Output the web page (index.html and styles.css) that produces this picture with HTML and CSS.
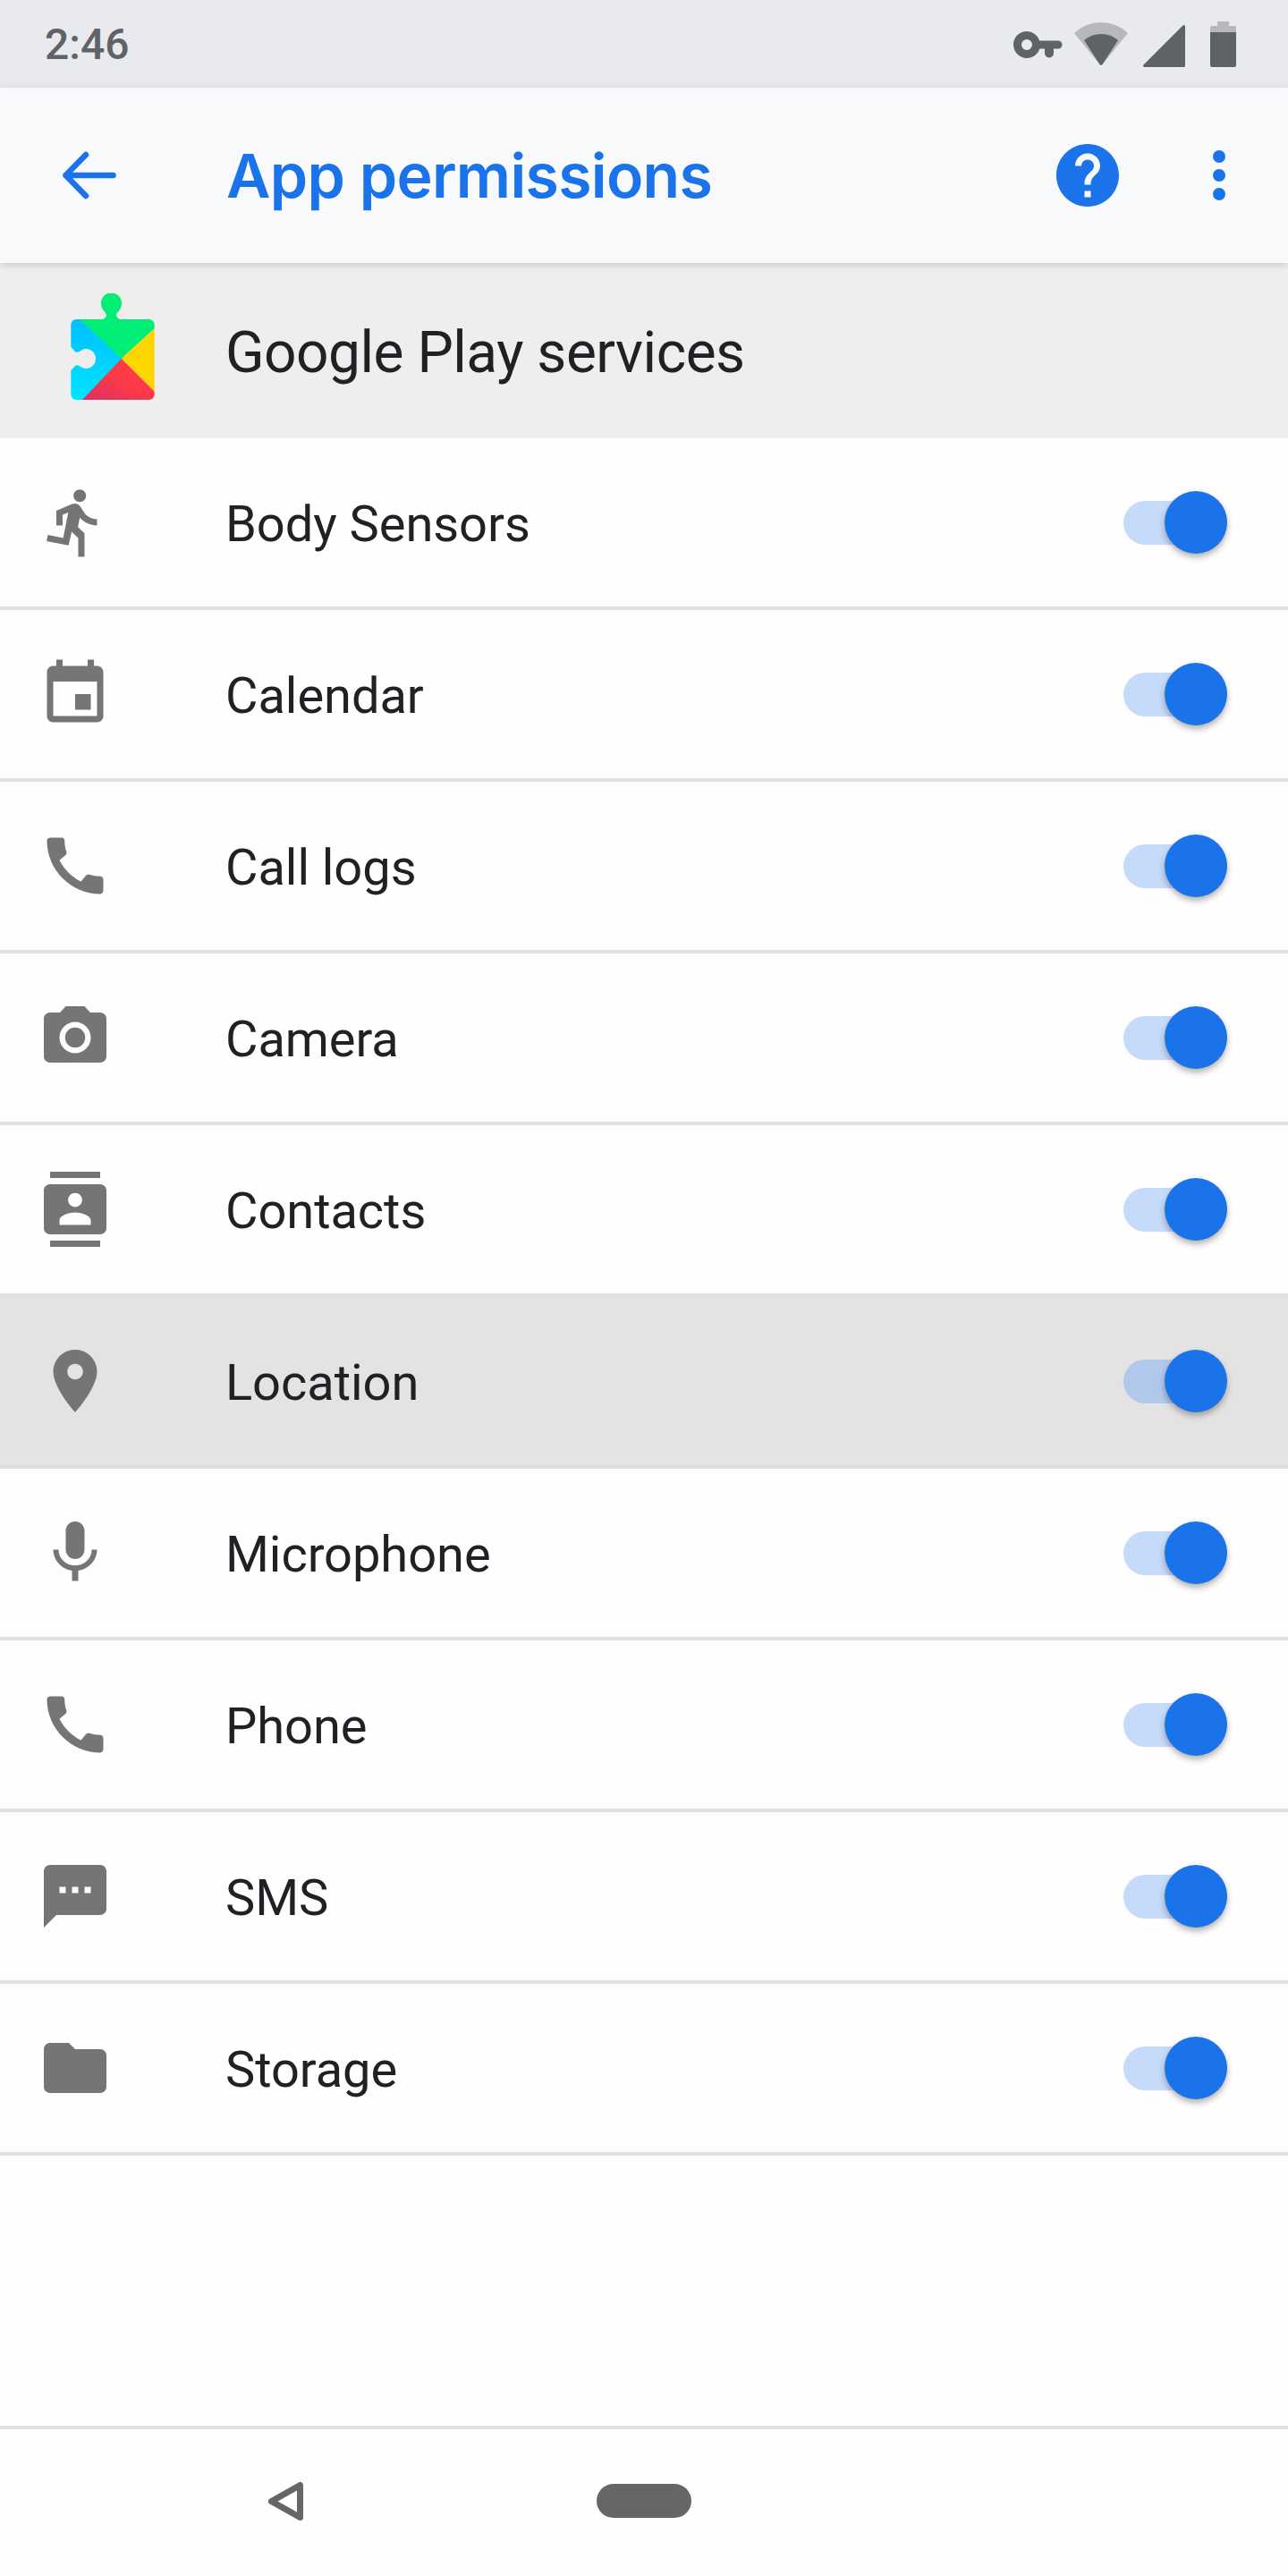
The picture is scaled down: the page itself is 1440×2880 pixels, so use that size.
FILE: index.html
```html
<!DOCTYPE html>
<html lang="en">
<head>
  <meta charset="UTF-8" />
  <title>App permissions</title>
  <link rel="stylesheet" href="styles.css">
</head>
<body>
  <div class="page">
    <div class="status-bar">
      <span class="clock">2:46</span>
      <svg class="status-icons" viewBox="1133 23 249 51" width="249" height="51">
        <!-- key -->
        <path fill="#5f6368" fill-rule="evenodd" d="M1148 34a15 15 0 0 1 14.300 10.500H1183a4.500 4.500 0 0 1 0 9h-5v5a5 5 0 0 1-10 0v-5h-5.700A15 15 0 1 1 1148 34zm0 9a6 6 0 1 0 0 12 6 6 0 0 0 0-12z"/>
        <!-- wifi -->
        <path fill="#b7b8bb" d="M1201 36Q1214 24 1231 24T1261 36L1232.500 71a2 2 0 0 1-3 0z"/>
        <path fill="#5f6368" d="M1212 44Q1220 37 1231 37T1250 44L1232.500 71a2 2 0 0 1-3 0z"/>
        <!-- signal -->
        <path fill="#5f6368" stroke="#5f6368" stroke-width="3" stroke-linejoin="round" d="M1323.500 28.500V72.500H1279.500z"/>
        <!-- battery -->
        <path fill="#b7b8bb" d="M1361 23h13v5h6a2 2 0 0 1 2 2v6h-29v-6a2 2 0 0 1 2-2h6z"/>
        <path fill="#5f6368" d="M1353 35h29v37a2 2 0 0 1-2 2h-25a2 2 0 0 1-2-2z"/>
      </svg>
    </div>

    <header class="toolbar">
      <svg class="back-arrow" viewBox="0 0 66 66" width="66" height="66">
        <path fill="none" stroke="#1a73e8" stroke-width="6.500" stroke-linecap="round" stroke-linejoin="round" d="M59.500 33H6.500M29 10L6.500 33 29 56"/>
      </svg>
      <h1 class="toolbar-title">App permissions</h1>
      <svg class="icon help" viewBox="0 0 24 24"><path d="M12 2C6.480 2 2 6.480 2 12s4.480 10 10 10 10-4.480 10-10S17.520 2 12 2zm1 17h-2v-2h2v2zm2.070-7.750l-.9.920C13.450 12.900 13 13.500 13 15h-2v-.5c0-1.100.45-2.100 1.170-2.830l1.240-1.260c.37-.36.59-.86.59-1.410 0-1.100-.9-2-2-2s-2 .9-2 2H8c0-2.210 1.790-4 4-4s4 1.790 4 4c0 .88-.36 1.680-.93 2.250z"/></svg>
      <svg class="icon more" viewBox="0 0 24 24"><circle cx="12" cy="6" r="2"/><circle cx="12" cy="12" r="2"/><circle cx="12" cy="18" r="2"/></svg>
    </header>

    <div class="app-header">
      <svg class="app-logo" viewBox="79 328 94 120" width="94" height="120">
        <defs>
          <clipPath id="logoBody"><rect x="79.300" y="357" width="93.400" height="90" rx="6"/></clipPath>
          <linearGradient id="logoCyan" x1="0" y1="0" x2="0" y2="1">
            <stop offset="0" stop-color="#00bfff"/>
            <stop offset="1" stop-color="#00e4ff"/>
          </linearGradient>
          <linearGradient id="logoRed" x1="0" y1="1" x2="1" y2="0">
            <stop offset="0" stop-color="#dc2f62"/>
            <stop offset=".55" stop-color="#ff3a46"/>
          </linearGradient>
        </defs>
        <path fill="#00ee76" d="M112 358c4-1 7-3 7-6 0-3-6-5-6-13a11.500 11.500 0 0 1 23 0c0 8-6 10-6 13 0 3 3 5 7 6z"/>
        <g clip-path="url(#logoBody)">
          <rect x="79" y="357" width="60" height="90" fill="url(#logoCyan)"/>
          <path fill="#00ee76" d="M89 357H173V367L135.700 401z"/>
          <path fill="#ffd500" d="M173 367V438L135.700 401z"/>
          <path fill="url(#logoRed)" d="M135.700 401L173 438V447H92z"/>
        </g>
        <path fill="#eeeeee" d="M79 388c2 1 3 3 5 5 2 2 5 0 8-2 6-3 15 1 15 10s-9 13-15 10c-3-2-6-4-8-2-2 2-3 4-5 5z"/>
      </svg>
      <span class="app-name">Google Play services</span>
    </div>

    <ul class="perm-list">
      <li class="perm-row">
        <svg class="icon perm-icon" viewBox="0 0 24 24"><path d="M13.490 5.480c1.100 0 2-.9 2-2s-.9-2-2-2-2 .9-2 2 .9 2 2 2zm-3.600 13.900l1-4.400 2.100 2v6h2v-7.500l-2.100-2 .6-3c1.300 1.500 3.300 2.500 5.500 2.500v-2c-1.900 0-3.500-1-4.300-2.400l-1-1.600c-.4-.6-1-1-1.700-1-.3 0-.5.1-.8.1l-5.200 2.200v4.700h2v-3.400l1.800-.7-1.600 8.100-4.900-1-.4 2 7 1.400z"/></svg>
        <span class="perm-label">Body Sensors</span>
        <span class="switch"><span class="thumb"></span></span>
      </li>
      <li class="perm-row">
        <svg class="icon perm-icon" viewBox="0 0 24 24"><path d="M17 12h-5v5h5v-5zM16 1v2H8V1H6v2H5c-1.110 0-1.990.9-1.990 2L3 19c0 1.100.89 2 2 2h14c1.100 0 2-.9 2-2V5c0-1.100-.9-2-2-2h-1V1h-2zm3 18H5V8h14v11z"/></svg>
        <span class="perm-label">Calendar</span>
        <span class="switch"><span class="thumb"></span></span>
      </li>
      <li class="perm-row">
        <svg class="icon perm-icon" viewBox="0 0 24 24"><path d="M20.010 15.380c-1.230 0-2.420-.2-3.530-.56-.35-.12-.74-.03-1.010.24l-1.570 1.970c-2.830-1.350-5.480-3.900-6.890-6.830l1.950-1.660c.27-.28.35-.67.24-1.020-.37-1.110-.56-2.300-.56-3.530 0-.54-.45-.99-.99-.99H4.190C3.650 3 3 3.240 3 3.990 3 13.280 10.730 21 20.010 21c.71 0 .99-.63.99-1.180v-3.450c0-.54-.45-.99-.99-.99z"/></svg>
        <span class="perm-label">Call logs</span>
        <span class="switch"><span class="thumb"></span></span>
      </li>
      <li class="perm-row">
        <svg class="icon perm-icon" viewBox="0 0 24 24"><circle cx="12" cy="12" r="3.200"/><path d="M9 2L7.170 4H4c-1.100 0-2 .9-2 2v12c0 1.100.9 2 2 2h16c1.100 0 2-.9 2-2V6c0-1.100-.9-2-2-2h-3.170L15 2H9zm3 15c-2.760 0-5-2.240-5-5s2.240-5 5-5 5 2.240 5 5-2.240 5-5 5z"/></svg>
        <span class="perm-label">Camera</span>
        <span class="switch"><span class="thumb"></span></span>
      </li>
      <li class="perm-row">
        <svg class="icon perm-icon" viewBox="0 0 24 24"><path d="M20 0H4v2h16V0zM4 24h16v-2H4v2zM20 4H4c-1.100 0-2 .9-2 2v12c0 1.100.9 2 2 2h16c1.100 0 2-.9 2-2V6c0-1.100-.9-2-2-2zm-8 2.750c1.240 0 2.250 1.010 2.250 2.250s-1.010 2.250-2.250 2.250S9.750 10.240 9.750 9 10.760 6.750 12 6.750zM17 17H7v-1.500c0-1.670 3.330-2.500 5-2.500s5 .83 5 2.500V17z"/></svg>
        <span class="perm-label">Contacts</span>
        <span class="switch"><span class="thumb"></span></span>
      </li>
      <li class="perm-row pressed">
        <svg class="icon perm-icon" viewBox="0 0 24 24"><path d="M12 2C8.130 2 5 5.130 5 9c0 5.250 7 13 7 13s7-7.750 7-13c0-3.870-3.130-7-7-7zm0 9.500c-1.380 0-2.500-1.120-2.500-2.500s1.120-2.500 2.500-2.500 2.500 1.120 2.500 2.500-1.120 2.500-2.500 2.500z"/></svg>
        <span class="perm-label">Location</span>
        <span class="switch"><span class="thumb"></span></span>
      </li>
      <li class="perm-row">
        <svg class="icon perm-icon" viewBox="0 0 24 24"><path d="M12 14c1.660 0 2.990-1.340 2.990-3L15 5c0-1.660-1.340-3-3-3S9 3.340 9 5v6c0 1.660 1.340 3 3 3zm5.300-3c0 3-2.540 5.100-5.300 5.100S6.700 14 6.700 11H5c0 3.410 2.720 6.230 6 6.720V21h2v-3.280c3.280-.48 6-3.300 6-6.720h-1.700z"/></svg>
        <span class="perm-label">Microphone</span>
        <span class="switch"><span class="thumb"></span></span>
      </li>
      <li class="perm-row">
        <svg class="icon perm-icon" viewBox="0 0 24 24"><path d="M20.010 15.380c-1.230 0-2.420-.2-3.530-.56-.35-.12-.74-.03-1.010.24l-1.570 1.970c-2.830-1.350-5.480-3.900-6.890-6.830l1.950-1.660c.27-.28.35-.67.24-1.020-.37-1.110-.56-2.300-.56-3.530 0-.54-.45-.99-.99-.99H4.190C3.650 3 3 3.240 3 3.990 3 13.280 10.730 21 20.010 21c.71 0 .99-.63.99-1.180v-3.450c0-.54-.45-.99-.99-.99z"/></svg>
        <span class="perm-label">Phone</span>
        <span class="switch"><span class="thumb"></span></span>
      </li>
      <li class="perm-row">
        <svg class="icon perm-icon" viewBox="0 0 24 24"><path d="M20 2H4c-1.100 0-1.990.9-1.990 2L2 22l4-4h14c1.100 0 2-.9 2-2V4c0-1.100-.9-2-2-2zM9 11H7V9h2v2zm4 0h-2V9h2v2zm4 0h-2V9h2v2z"/></svg>
        <span class="perm-label">SMS</span>
        <span class="switch"><span class="thumb"></span></span>
      </li>
      <li class="perm-row">
        <svg class="icon perm-icon" viewBox="0 0 24 24"><path d="M10 4H4c-1.100 0-1.990.9-1.990 2L2 18c0 1.100.9 2 2 2h16c1.100 0 2-.9 2-2V8c0-1.100-.9-2-2-2h-8l-2-2z"/></svg>
        <span class="perm-label">Storage</span>
        <span class="switch"><span class="thumb"></span></span>
      </li>
    </ul>

    <nav class="nav-bar">
      <svg class="nav-back" viewBox="0 0 39 43" width="39" height="43">
        <path fill="none" stroke="#666666" stroke-width="7" stroke-linejoin="round" d="M35.500 3.500V39.500L3.500 21.500z"/>
      </svg>
      <span class="nav-pill"></span>
    </nav>
  </div>
</body>
</html>
```

FILE: styles.css
```css
* {
  box-sizing: border-box;
}
body {
  margin: 0;
  background: #fefefe;
  font-family: Roboto, sans-serif;
  color: #202124;
}
.page {
  display: flex;
  flex-direction: column;
  width: 1440px;
  height: 2880px;
}
.status-bar {
  display: flex;
  justify-content: space-between;
  align-items: center;
  flex: none;
  height: 98px;
  padding: 0 58px 0 50px;
  background: #e8eaed;
}
.clock {
  font-size: 48px;
  font-weight: 500;
  color: #5f6368;
}
.toolbar {
  position: relative;
  display: flex;
  align-items: center;
  flex: none;
  height: 196px;
  padding: 0 35px 0 67px;
  background: #f8f9fa;
  box-shadow: 0 2px 8px rgba(0,0,0,0.16);
}
.toolbar-title {
  flex: 1;
  margin: 0 0 0 120px;
  font-family: Inter, Roboto, sans-serif;
  font-size: 68px;
  font-weight: 600;
  letter-spacing: -0.7px;
  color: #1a73e8;
}
.icon {
  flex: none;
  width: 84px;
  height: 84px;
  fill: #757575;
}
.help, .more {
  fill: #1a73e8;
}
.help {
  margin-right: 63px;
}
.app-header {
  display: flex;
  align-items: center;
  flex: none;
  height: 196px;
  padding-left: 79px;
  background: #eeeeee;
}
.app-logo {
  margin-bottom: 8px;
}
.app-name {
  margin: 4px 0 0 79px;
  font-size: 64px;
  letter-spacing: -0.5px;
}
.perm-list {
  flex: 1;
  margin: 0;
  padding: 0;
  list-style: none;
}
.perm-row {
  display: flex;
  align-items: center;
  height: 192px;
  padding: 0 68px 0 42px;
  border-bottom: 4px solid #e0e0e0;
}
.pressed {
  background: #e3e3e3;
  border-bottom-color: #dcdcdc;
}
.perm-label {
  flex: 1;
  margin: 4px 0 0 126px;
  font-size: 56px;
  letter-spacing: -0.05px;
}
.switch {
  position: relative;
  flex: none;
  width: 116px;
  height: 49px;
  border-radius: 25px;
  background: #c6dafa;
}
.pressed .switch {
  background: #b0c8ea;
}
.thumb {
  position: absolute;
  top: -11px;
  right: 0;
  width: 70px;
  height: 70px;
  border-radius: 50%;
  background: #1a73e8;
  box-shadow: 0 4px 7px rgba(0,0,0,0.3);
}
.nav-bar {
  display: flex;
  align-items: center;
  flex: none;
  height: 168px;
  padding: 0 0 4px 300px;
  border-top: 4px solid #e0e0e0;
}
.nav-pill {
  width: 106px;
  height: 38px;
  margin-left: 328px;
  border-radius: 19px;
  background: #666666;
}
```
